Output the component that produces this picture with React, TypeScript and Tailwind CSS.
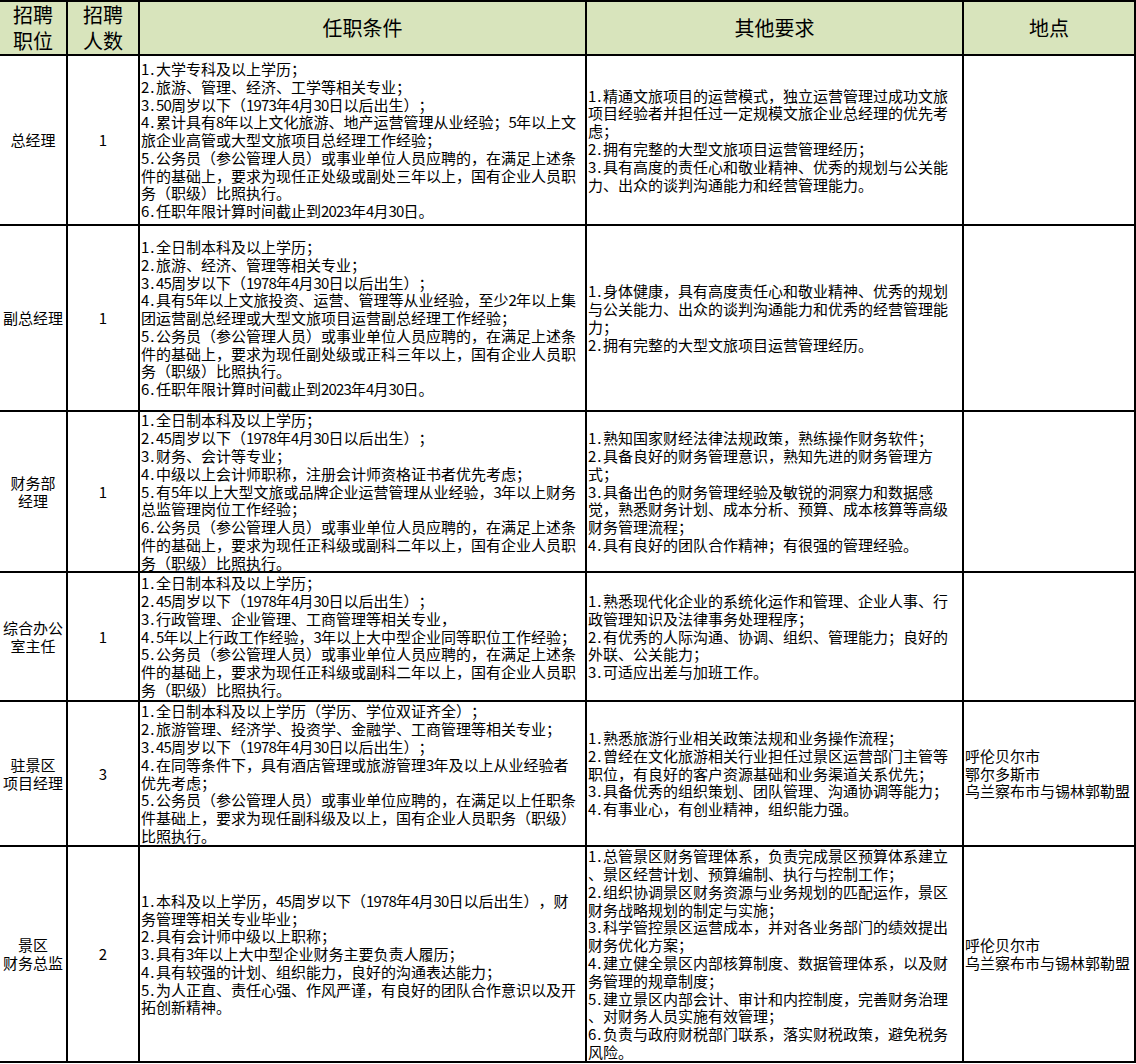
import React from "react";

type Row = {
  pos: string[];
  num: string;
  cond: string[];
  other: string[];
  loc: string[];
};

const rows: Row[] = [
  {
    pos: ["总经理"],
    num: "1",
    cond: [
      "1.大学专科及以上学历；",
      "2.旅游、管理、经济、工学等相关专业；",
      "3.50周岁以下（1973年4月30日以后出生）；",
      "4.累计具有8年以上文化旅游、地产运营管理从业经验；5年以上文",
      "旅企业高管或大型文旅项目总经理工作经验；",
      "5.公务员（参公管理人员）或事业单位人员应聘的，在满足上述条",
      "件的基础上，要求为现任正处级或副处三年以上，国有企业人员职",
      "务（职级）比照执行。",
      "6.任职年限计算时间截止到2023年4月30日。",
    ],
    other: [
      "1.精通文旅项目的运营模式，独立运营管理过成功文旅",
      "项目经验者并担任过一定规模文旅企业总经理的优先考",
      "虑；",
      "2.拥有完整的大型文旅项目运营管理经历；",
      "3.具有高度的责任心和敬业精神、优秀的规划与公关能",
      "力、出众的谈判沟通能力和经营管理能力。",
    ],
    loc: [],
  },
  {
    pos: ["副总经理"],
    num: "1",
    cond: [
      "1.全日制本科及以上学历；",
      "2.旅游、经济、管理等相关专业；",
      "3.45周岁以下（1978年4月30日以后出生）；",
      "4.具有5年以上文旅投资、运营、管理等从业经验，至少2年以上集",
      "团运营副总经理或大型文旅项目运营副总经理工作经验；",
      "5.公务员（参公管理人员）或事业单位人员应聘的，在满足上述条",
      "件的基础上，要求为现任副处级或正科三年以上，国有企业人员职",
      "务（职级）比照执行。",
      "6.任职年限计算时间截止到2023年4月30日。",
    ],
    other: [
      "1.身体健康，具有高度责任心和敬业精神、优秀的规划",
      "与公关能力、出众的谈判沟通能力和优秀的经营管理能",
      "力；",
      "2.拥有完整的大型文旅项目运营管理经历。",
    ],
    loc: [],
  },
  {
    pos: ["财务部", "经理"],
    num: "1",
    cond: [
      "1.全日制本科及以上学历；",
      "2.45周岁以下（1978年4月30日以后出生）；",
      "3.财务、会计等专业；",
      "4.中级以上会计师职称，注册会计师资格证书者优先考虑；",
      "5.有5年以上大型文旅或品牌企业运营管理从业经验，3年以上财务",
      "总监管理岗位工作经验；",
      "6.公务员（参公管理人员）或事业单位人员应聘的，在满足上述条",
      "件的基础上，要求为现任正科级或副科二年以上，国有企业人员职",
      "务（职级）比照执行。",
    ],
    other: [
      "1.熟知国家财经法律法规政策，熟练操作财务软件；",
      "2.具备良好的财务管理意识，熟知先进的财务管理方",
      "式；",
      "3.具备出色的财务管理经验及敏锐的洞察力和数据感",
      "觉，熟悉财务计划、成本分析、预算、成本核算等高级",
      "财务管理流程；",
      "4.具有良好的团队合作精神；有很强的管理经验。",
    ],
    loc: [],
  },
  {
    pos: ["综合办公", "室主任"],
    num: "1",
    cond: [
      "1.全日制本科及以上学历；",
      "2.45周岁以下（1978年4月30日以后出生）；",
      "3.行政管理、企业管理、工商管理等相关专业，",
      "4.5年以上行政工作经验，3年以上大中型企业同等职位工作经验；",
      "5.公务员（参公管理人员）或事业单位人员应聘的，在满足上述条",
      "件的基础上，要求为现任正科级或副科二年以上，国有企业人员职",
      "务（职级）比照执行。",
    ],
    other: [
      "1.熟悉现代化企业的系统化运作和管理、企业人事、行",
      "政管理知识及法律事务处理程序；",
      "2.有优秀的人际沟通、协调、组织、管理能力；良好的",
      "外联、公关能力；",
      "3.可适应出差与加班工作。",
    ],
    loc: [],
  },
  {
    pos: ["驻景区", "项目经理"],
    num: "3",
    cond: [
      "1.全日制本科及以上学历（学历、学位双证齐全）；",
      "2.旅游管理、经济学、投资学、金融学、工商管理等相关专业；",
      "3.45周岁以下（1978年4月30日以后出生）；",
      "4.在同等条件下，具有酒店管理或旅游管理3年及以上从业经验者",
      "优先考虑；",
      "5.公务员（参公管理人员）或事业单位应聘的，在满足以上任职条",
      "件基础上，要求为现任副科级及以上，国有企业人员职务（职级）",
      "比照执行。",
    ],
    other: [
      "1.熟悉旅游行业相关政策法规和业务操作流程；",
      "2.曾经在文化旅游相关行业担任过景区运营部门主管等",
      "职位，有良好的客户资源基础和业务渠道关系优先；",
      "3.具备优秀的组织策划、团队管理、沟通协调等能力；",
      "4.有事业心，有创业精神，组织能力强。",
    ],
    loc: ["呼伦贝尔市", "鄂尔多斯市", "乌兰察布市与锡林郭勒盟"],
  },
  {
    pos: ["景区", "财务总监"],
    num: "2",
    cond: [
      "1.本科及以上学历，45周岁以下（1978年4月30日以后出生），财",
      "务管理等相关专业毕业；",
      "2.具有会计师中级以上职称；",
      "3.具有3年以上大中型企业财务主要负责人履历；",
      "4.具有较强的计划、组织能力，良好的沟通表达能力；",
      "5.为人正直、责任心强、作风严谨，有良好的团队合作意识以及开",
      "拓创新精神。",
    ],
    other: [
      "1.总管景区财务管理体系，负责完成景区预算体系建立",
      "、景区经营计划、预算编制、执行与控制工作；",
      "2.组织协调景区财务资源与业务规划的匹配运作，景区",
      "财务战略规划的制定与实施；",
      "3.科学管控景区运营成本，并对各业务部门的绩效提出",
      "财务优化方案；",
      "4.建立健全景区内部核算制度、数据管理体系，以及财",
      "务管理的规章制度；",
      "5.建立景区内部会计、审计和内控制度，完善财务治理",
      "、对财务人员实施有效管理；",
      "6.负责与政府财税部门联系，落实财税政策，避免税务",
      "风险。",
    ],
    loc: ["呼伦贝尔市", "乌兰察布市与锡林郭勒盟"],
  },
];

// Split a line into runs of half-width (ASCII) and full-width characters,
// so every half-width character takes half a cell, as in the source sheet.
function Line({ text }: { text: string }) {
  const parts: { ascii: boolean; s: string }[] = [];
  for (const ch of text) {
    const ascii = ch.charCodeAt(0) < 128;
    const last = parts[parts.length - 1];
    if (last && last.ascii === ascii) last.s += ch;
    else parts.push({ ascii, s: ch });
  }
  return (
    <div className="whitespace-nowrap">
      {parts.map((p, i) =>
        p.ascii ? (
          <span key={i} className="inline-flex">
            {Array.from(p.s).map((c, k) => (
              <span key={k} className="inline-block w-[7.5px] text-center">
                {c}
              </span>
            ))}
          </span>
        ) : (
          <span key={i}>{p.s}</span>
        )
      )}
    </div>
  );
}

function Lines({ lines }: { lines: string[] }) {
  return (
    <div className="flex flex-col">
      {lines.map((l, i) => (
        <Line key={i} text={l} />
      ))}
    </div>
  );
}

function Header({ lines }: { lines: string[] }) {
  return (
    <div className="bg-[#d8e4bc] flex flex-col items-center justify-center text-[20px] leading-[26px] text-black">
      {lines.map((l, i) => (
        <div key={i} className="whitespace-nowrap">
          {l}
        </div>
      ))}
    </div>
  );
}

export default function App() {
  return (
    <div className="w-[1136px] h-[1064px] bg-white font-['Noto_Sans_CJK_SC',sans-serif] text-black [text-spacing-trim:space-all]">
      <div className="grid grid-cols-[66px_70px_445px_375px_170px] grid-rows-[52px_168px_184px_159px_127px_143px_214px] gap-[2px] bg-black pt-[2px] pr-[2px] pb-[2px] w-[1136px]">
        <Header lines={["招聘", "职位"]} />
        <Header lines={["招聘", "人数"]} />
        <Header lines={["任职条件"]} />
        <Header lines={["其他要求"]} />
        <Header lines={["地点"]} />
        {rows.map((r, i) => (
          <React.Fragment key={i}>
            <div className="bg-white flex flex-col items-center justify-center text-[15px] leading-[18px] text-center">
              {r.pos.map((p, j) => (
                <div key={j} className="whitespace-nowrap">
                  {p}
                </div>
              ))}
            </div>
            <div className="bg-white flex items-center justify-center text-[15px] leading-[18px]">
              {r.num}
            </div>
            <div className="bg-white flex items-center pl-[1px] text-[15px] leading-[17.8px]">
              <Lines lines={r.cond} />
            </div>
            <div className="bg-white flex items-center pl-[1px] text-[15px] leading-[17.8px]">
              <Lines lines={r.other} />
            </div>
            <div className="bg-white flex items-center pl-[1px] text-[15px] leading-[17.8px]">
              <Lines lines={r.loc} />
            </div>
          </React.Fragment>
        ))}
      </div>
    </div>
  );
}
